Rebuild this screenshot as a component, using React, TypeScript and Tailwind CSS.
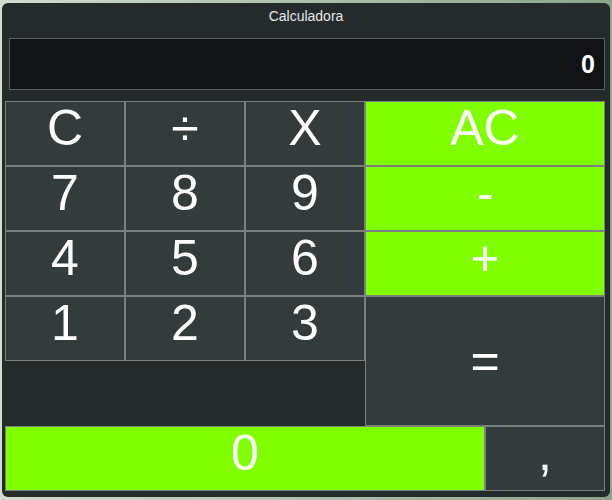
import React from 'react';

type Key = {
  label: string;
  green?: boolean;
  span?: string;
  center?: boolean;
};

const keys: Key[] = [
  { label: 'C' },
  { label: '÷' },
  { label: 'X' },
  { label: 'AC', green: true, span: 'col-span-2' },
  { label: '7' },
  { label: '8' },
  { label: '9' },
  { label: '-', green: true, span: 'col-span-2' },
  { label: '4' },
  { label: '5' },
  { label: '6' },
  { label: '+', green: true, span: 'col-span-2' },
  { label: '1' },
  { label: '2' },
  { label: '3' },
  { label: '=', span: 'col-start-4 col-span-2 row-span-2', center: true },
  { label: '0', green: true, span: 'col-start-1 row-start-6 col-span-4' },
  { label: ',', span: 'col-start-5 row-start-6' },
];

const App: React.FC = () => {
  return (
    <div
      className="w-[612px] h-[500px] bg-gradient-to-r from-[#d2dccf] to-[#8aa68a] pt-[3px] pb-[3px] pl-[2px] pr-[2px]"
      style={{ fontFamily: '"Liberation Sans", Arial, sans-serif' }}
    >
      <div className="h-full rounded-[6px] bg-[#252a2b] flex flex-col">
        <div className="h-[35px] pt-[5px] text-center text-[14px] leading-[16px] text-[#e6e8e8]">
          Calculadora
        </div>

        <div className="ml-[7px] w-[596px] h-[52px] border border-[#5b5f60] bg-[#111415] flex items-center justify-end pr-[9px]">
          <span className="text-[25px] font-bold text-white leading-none">0</span>
        </div>

        <div className="mt-[11px] ml-[3px] grid grid-cols-[repeat(5,120px)] grid-rows-[repeat(6,65px)]">
          {keys.map((k) => (
            <button
              key={k.label}
              className={`${k.span ?? ''} border border-[#7d7f7f] flex items-center justify-center text-white text-[50px] leading-none ${
                k.green ? 'bg-[#80ff00]' : 'bg-[#343b3d]'
              } ${k.center ? '' : 'pb-[11px]'}`}
            >
              {k.label}
            </button>
          ))}
        </div>
      </div>
    </div>
  );
};

export default App;
